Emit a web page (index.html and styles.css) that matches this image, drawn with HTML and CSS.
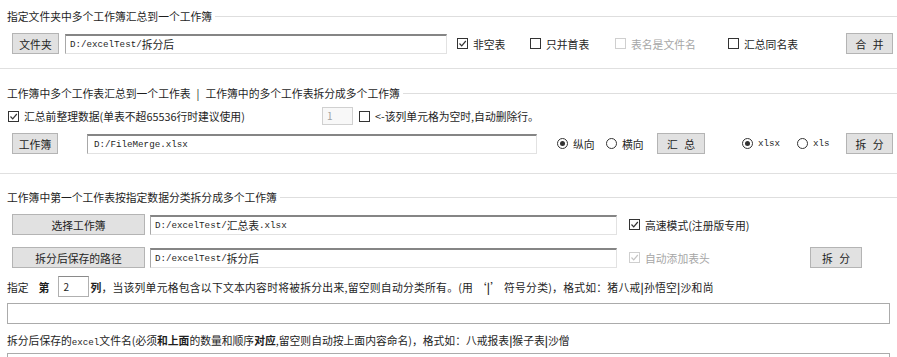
FILE: index.html
```html
<!DOCTYPE html>
<html lang="zh-CN">
<head>
    <meta charset="UTF-8">
    <title>工作簿汇总拆分</title>
    <link rel="stylesheet" href="styles.css">
</head>
<body>
    <div class="group g1">
        <div class="legend"><span>指定文件夹中多个工作簿汇总到一个工作簿</span></div>
        <div class="row r1">
            <button class="btn w-folder">文件夹</button>
            <div class="field f-folder"><span class="mono">D:/excelTest/</span>拆分后</div>
            <label class="chk w73"><span class="box on"><svg viewBox="0 0 9 9"><polyline points="1.5,4.5 3.7,6.8 7.8,2"/></svg></span>非空表</label>
            <label class="chk w85"><span class="box"></span>只并首表</label>
            <label class="chk w113 off"><span class="box"></span>表名是文件名</label>
            <label class="chk"><span class="box"></span>汇总同名表</label>
            <button class="btn w47 push spaced">合 并</button>
        </div>
    </div>

    <div class="group g2">
        <div class="legend"><span>工作簿中多个工作表汇总到一个工作表<i class="bar">|</i>工作簿中的多个工作表拆分成多个工作簿</span></div>
        <div class="row r2a">
            <label class="chk w314"><span class="box on"><svg viewBox="0 0 9 9"><polyline points="1.5,4.5 3.7,6.8 7.8,2"/></svg></span>汇总前整理数据(单表不超65536行时建议使用)</label>
            <div class="num off">1</div>
            <label class="chk gap6"><span class="box"></span>&lt;-该列单元格为空时,自动删除行。</label>
        </div>
        <div class="row r2b">
            <button class="btn w46">工作簿</button>
            <div class="field f-book"><span class="mono">D:/FileMerge.xlsx</span></div>
            <label class="chk w49 gap20"><span class="radio on"></span>纵向</label>
            <label class="chk w51"><span class="radio"></span>横向</label>
            <button class="btn w48 spaced">汇 总</button>
            <label class="chk w55 gap37"><span class="radio on"></span><span class="mono">xlsx</span></label>
            <label class="chk w49"><span class="radio"></span><span class="mono">xls</span></label>
            <button class="btn w47 spaced">拆 分</button>
        </div>
    </div>

    <div class="group g3">
        <div class="legend"><span>工作簿中第一个工作表按指定数据分类拆分成多个工作簿</span></div>
        <div class="row r3a">
            <button class="btn w133">选择工作簿</button>
            <div class="field f-path"><span class="mono">D:/excelTest/</span>汇总表<span class="mono">.xlsx</span></div>
            <label class="chk gap12"><span class="box on"><svg viewBox="0 0 9 9"><polyline points="1.5,4.5 3.7,6.8 7.8,2"/></svg></span>高速模式(注册版专用)</label>
        </div>
        <div class="row r3b">
            <button class="btn w133">拆分后保存的路径</button>
            <div class="field f-path"><span class="mono">D:/excelTest/</span>拆分后</div>
            <label class="chk gap12 w181 off"><span class="box on"><svg viewBox="0 0 9 9"><polyline points="1.5,4.5 3.7,6.8 7.8,2"/></svg></span>自动添加表头</label>
            <button class="btn w52 spaced">拆 分</button>
        </div>
        <div class="row r3c">
            <span class="txt">指定<b class="nth">第</b></span>
            <div class="num col">2</div>
            <span class="txt long"><b>列</b>，当该列单元格包含以下文本内容时将被拆分出来,留空则自动分类所有。(用 ‘<b>|</b>’ 符号分类)，格式如：猪八戒<b>|</b>孙悟空<b>|</b>沙和尚</span>
        </div>
        <div class="wide"></div>
        <div class="row r3d">
            <span class="txt">拆分后保存的<span class="mono">excel</span>文件名(必须<b>和上面</b>的数量和顺序<b>对应</b>,留空则自动按上面内容命名)，格式如：八戒报表<b>|</b>猴子表<b>|</b>沙僧</span>
        </div>
        <div class="wide last"></div>
    </div>
</body>
</html>
```

FILE: styles.css
```css
* {
    margin: 0;
    padding: 0;
    box-sizing: border-box;
}

body {
    background: #fff;
    color: #1e1e1e;
    font-family: "Noto Sans CJK SC", "Noto Sans", sans-serif;
    font-size: 10.8px;
    width: 897px;
    overflow: hidden;
}

.mono {
    font-family: "Liberation Mono", "Noto Sans CJK SC", monospace;
    font-size: 9.2px;
}

b {
    font-weight: 700;
}

/* group boxes */

.group {
    border-bottom: 1px solid #e0e0e0;
}

.legend {
    display: flex;
    align-items: center;
    height: 16px;
    padding-left: 7px;
}

.legend::after {
    content: "";
    flex: 1;
    height: 1px;
    background: #dedede;
    margin-left: 3px;
}

.bar {
    font-style: normal;
    margin: 0 6px;
}

.g1 {
    padding-top: 8px;
    padding-bottom: 14px;
}

.g2 {
    margin-top: 16px;
    padding-bottom: 19px;
}

.g3 {
    margin-top: 15px;
    border-bottom: 0;
}

.row {
    display: flex;
    align-items: center;
}

.r1 {
    margin-top: 9px;
    padding-left: 12px;
    padding-right: 4px;
}

.r2a {
    margin-top: 6px;
    padding-left: 8px;
    height: 18px;
}

.r2b {
    margin-top: 8px;
    padding-left: 12px;
}

.r3a {
    margin-top: 9px;
    padding-left: 12px;
}

.r3b {
    margin-top: 12px;
    padding-left: 12px;
}

.r3c {
    margin-top: 8px;
    padding-left: 7px;
    height: 21px;
}

.r3d {
    margin-top: 8px;
    padding-left: 7px;
    height: 16px;
}

/* controls */

.btn {
    height: 21px;
    background: #e1e1e1;
    border: 1px solid #b4b4b4;
    color: #1e1e1e;
    font-family: inherit;
    font-size: 10.8px;
    flex-shrink: 0;
}

.btn.spaced {
    word-spacing: 4px;
}

.w-folder { width: 47px; }
.w46 { width: 46px; }
.w47 { width: 47px; }
.w48 { width: 48px; }
.w52 { width: 52px; }
.w133 { width: 133px; }

.push {
    margin-left: auto;
}

.field {
    height: 20px;
    background: #fff;
    border: 1px solid #e2e2e2;
    border-top: 2px solid #858585;
    border-left-color: #a8a8a8;
    padding-left: 4px;
    display: flex;
    align-items: center;
    white-space: nowrap;
    flex-shrink: 0;
}

.f-folder {
    width: 382px;
    margin-left: 6px;
}

.f-book {
    width: 450px;
    margin-left: 29px;
    padding-left: 6px;
}

.f-path {
    width: 467px;
    margin-left: 5px;
}

.num {
    height: 18px;
    width: 31px;
    border: 1px solid #d0d0d0;
    background: #f8f8f8;
    color: #a0a0a0;
    padding-left: 4px;
    line-height: 16px;
    font-size: 10px;
    flex-shrink: 0;
}

.num.col {
    height: 21px;
    width: 31px;
    margin: 0 1px 0 9px;
    background: #fff;
    color: #1e1e1e;
    border: 1px solid #b0b0b0;
    border-top-color: #8a8a8a;
    line-height: 19px;
}

.nth {
    margin-left: 10px;
}

.long {
    letter-spacing: 0.25px;
}

.chk {
    display: flex;
    align-items: center;
    white-space: nowrap;
    flex-shrink: 0;
}

.chk.off {
    color: #a6a6a6;
}

.w49 { width: 49px; }
.w51 { width: 51px; }
.w55 { width: 55px; }
.w73 { width: 73px; }
.w85 { width: 85px; }
.w113 { width: 113px; }
.w181 { width: 181px; }
.w314 { width: 314px; }

.r1 .w73 { margin-left: 10px; }
.gap6 { margin-left: 6px; }
.gap12 { margin-left: 12px; }
.gap20 { margin-left: 20px; }
.gap37 { margin-left: 37px; }

.box {
    width: 11px;
    height: 11px;
    border: 1px solid #333;
    background: #fff;
    margin-right: 5px;
    display: flex;
}

.box svg {
    width: 9px;
    height: 9px;
    fill: none;
    stroke: #333;
    stroke-width: 1.2;
}

.off .box {
    border-color: #cfcfcf;
}

.off .box svg {
    stroke: #c4c4c4;
}

.radio {
    width: 11px;
    height: 11px;
    border: 1px solid #333;
    border-radius: 50%;
    margin-right: 5px;
    display: flex;
    align-items: center;
    justify-content: center;
}

.radio.on::after {
    content: "";
    width: 5px;
    height: 5px;
    border-radius: 50%;
    background: #333;
}

.wide {
    margin: 6px 7px 0;
    height: 21px;
    border: 1px solid #ababab;
}

.wide.last {
    margin-top: 5px;
}

.txt {
    white-space: nowrap;
}
```
